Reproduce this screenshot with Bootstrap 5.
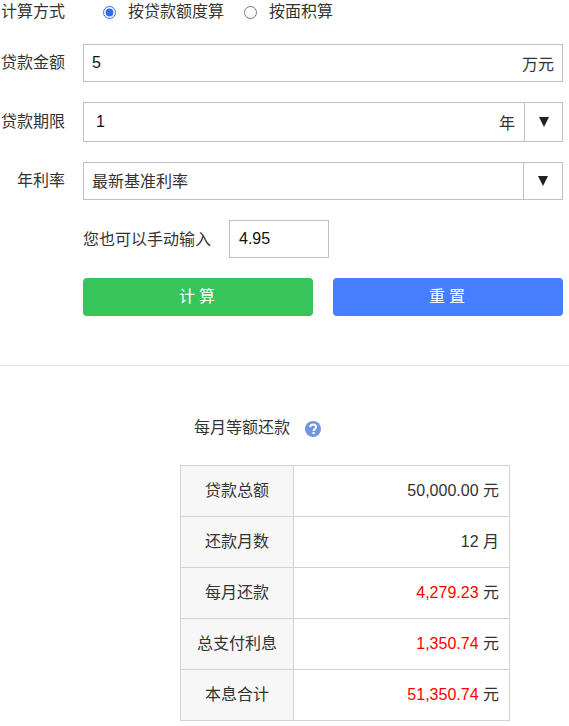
<!DOCTYPE html>
<html lang="zh">
<head>
<meta charset="utf-8">
<title>贷款计算</title>
<link href="https://cdn.jsdelivr.net/npm/bootstrap@5.3.0/dist/css/bootstrap.min.css" rel="stylesheet">
<style>
html,body{height:726px;overflow:hidden}
body{font-family:"Liberation Sans","Noto Sans CJK SC",sans-serif;font-size:16px;color:#333;background:#fff;margin:0}
.calc-form{padding:0 6px 0 0}
.f-row{display:flex;align-items:center}
.f-label{width:65px;margin-right:18px;text-align:right;flex:none;white-space:nowrap;line-height:24px;color:#333}
.row-way{height:24px;margin-bottom:20px}
.row-amount{height:38px;margin-bottom:20px}
.row-term{height:40px;margin-bottom:20px}
.row-rate{height:38px;margin-bottom:20px}
.row-manual{height:38px;margin-bottom:20px;padding-left:83px}
.radio-opt{display:flex;align-items:center;margin:0}
.radio-opt input{appearance:auto;-webkit-appearance:auto;width:13px;height:13px;margin:0 12px 0 0;accent-color:#2f6fed;flex:none}
.opt-a{margin-left:20px;width:141px}
.boxed{flex:1;height:100%;border:1px solid #c0c0c0;display:flex;align-items:stretch;background:#fff;min-width:0}
.boxed-val{flex:1;padding-left:8px;display:flex;align-items:center;color:#111;min-width:0}
.val-cjk{color:#333;padding-top:2px}
.term-val{padding-left:12px}
.boxed-unit{display:flex;align-items:center;padding-right:8px;color:#333;padding-top:3px}
.unit-wide{padding-right:9px}
.arrow-cell{width:39px;flex:none;border-left:1px solid #c0c0c0;display:flex;align-items:center;justify-content:center}
.arrow-narrow{width:38px}
.arrow-down{display:block;width:0;height:0;border-left:5px solid transparent;border-right:5px solid transparent;border-top:10px solid #222}
.rate-input{width:100px;height:38px;border:1px solid #c0c0c0;padding-left:9px;display:flex;align-items:center;color:#111;margin-left:18px}
.manual-label{width:128px;white-space:nowrap;padding-top:2px}
.btn-row{display:flex;gap:20px;padding-left:83px}
.act-btn{flex:1;height:38px;border:0;border-radius:4px;color:#fff;font-size:16px;letter-spacing:4px;padding:0 0 0 2px;display:flex;align-items:center;justify-content:center}
.act-btn:hover,.act-btn:active{color:#fff}
.act-green,.act-green:hover{background:#37c45a}
.act-blue,.act-blue:hover{background:#457eff}
.split{border:0;border-top:1px solid #e8e8e8;opacity:1;margin:49px 0 0}
.res-title{display:flex;align-items:center;height:24px;margin:50px 0 25px 194px;white-space:nowrap}
.qmark{display:flex;align-items:center;margin-left:15px;padding-top:1px}
.res-table{width:330px;margin:0 0 0 180px;table-layout:fixed;border-collapse:collapse}
.res-table td,.res-table th{border:1px solid #d2d2d2;height:51px;padding:0;vertical-align:middle;font-weight:400;color:#333}
.res-table th{width:113px;background:#f7f7f7;text-align:center}
.res-table td{text-align:right;padding-right:10px}
.num-red{color:#f00}
</style>
</head>
<body>
<form class="calc-form" onsubmit="return false">
  <div class="f-row row-way">
    <div class="f-label">计算方式</div>
    <label class="radio-opt opt-a"><input class="form-check-input" type="radio" name="way" checked>按贷款额度算</label>
    <label class="radio-opt"><input class="form-check-input" type="radio" name="way">按面积算</label>
  </div>
  <div class="f-row row-amount">
    <div class="f-label">贷款金额</div>
    <div class="boxed"><div class="boxed-val">5</div><div class="boxed-unit">万元</div></div>
  </div>
  <div class="f-row row-term">
    <div class="f-label">贷款期限</div>
    <div class="boxed"><div class="boxed-val term-val">1</div><div class="boxed-unit unit-wide">年</div><div class="arrow-cell arrow-narrow"><span class="arrow-down"></span></div></div>
  </div>
  <div class="f-row row-rate">
    <div class="f-label">年利率</div>
    <div class="boxed"><div class="boxed-val val-cjk">最新基准利率</div><div class="arrow-cell"><span class="arrow-down"></span></div></div>
  </div>
  <div class="f-row row-manual">
    <div class="manual-label">您也可以手动输入</div>
    <div class="rate-input">4.95</div>
  </div>
  <div class="btn-row">
    <button type="button" class="btn act-btn act-green">计算</button>
    <button type="button" class="btn act-btn act-blue">重置</button>
  </div>
</form>
<hr class="split">
<div class="res-title">每月等额还款
  <span class="qmark"><svg width="16" height="16" viewBox="0 0 16 16"><circle cx="8" cy="8" r="8" fill="#7096df"/><path d="M5.100 6.200C5.200 4.400 6.400 3.400 8.100 3.400c1.700 0 2.900 1 2.900 2.500 0 1.200-.7 1.800-1.400 2.300-.7.500-1 .8-1 1.600v.2" fill="none" stroke="#fff" stroke-width="2"/><rect x="7.500" y="11" width="2.100" height="2.100" fill="#fff"/></svg></span>
</div>
<table class="res-table">
  <tr><th>贷款总额</th><td>50,000.00 元</td></tr>
  <tr><th>还款月数</th><td>12 月</td></tr>
  <tr><th>每月还款</th><td><span class="num-red">4,279.23</span> 元</td></tr>
  <tr><th>总支付利息</th><td><span class="num-red">1,350.74</span> 元</td></tr>
  <tr><th>本息合计</th><td><span class="num-red">51,350.74</span> 元</td></tr>
</table>
<script src="https://cdn.jsdelivr.net/npm/bootstrap@5.3.0/dist/js/bootstrap.bundle.min.js"></script>
</body>
</html>
